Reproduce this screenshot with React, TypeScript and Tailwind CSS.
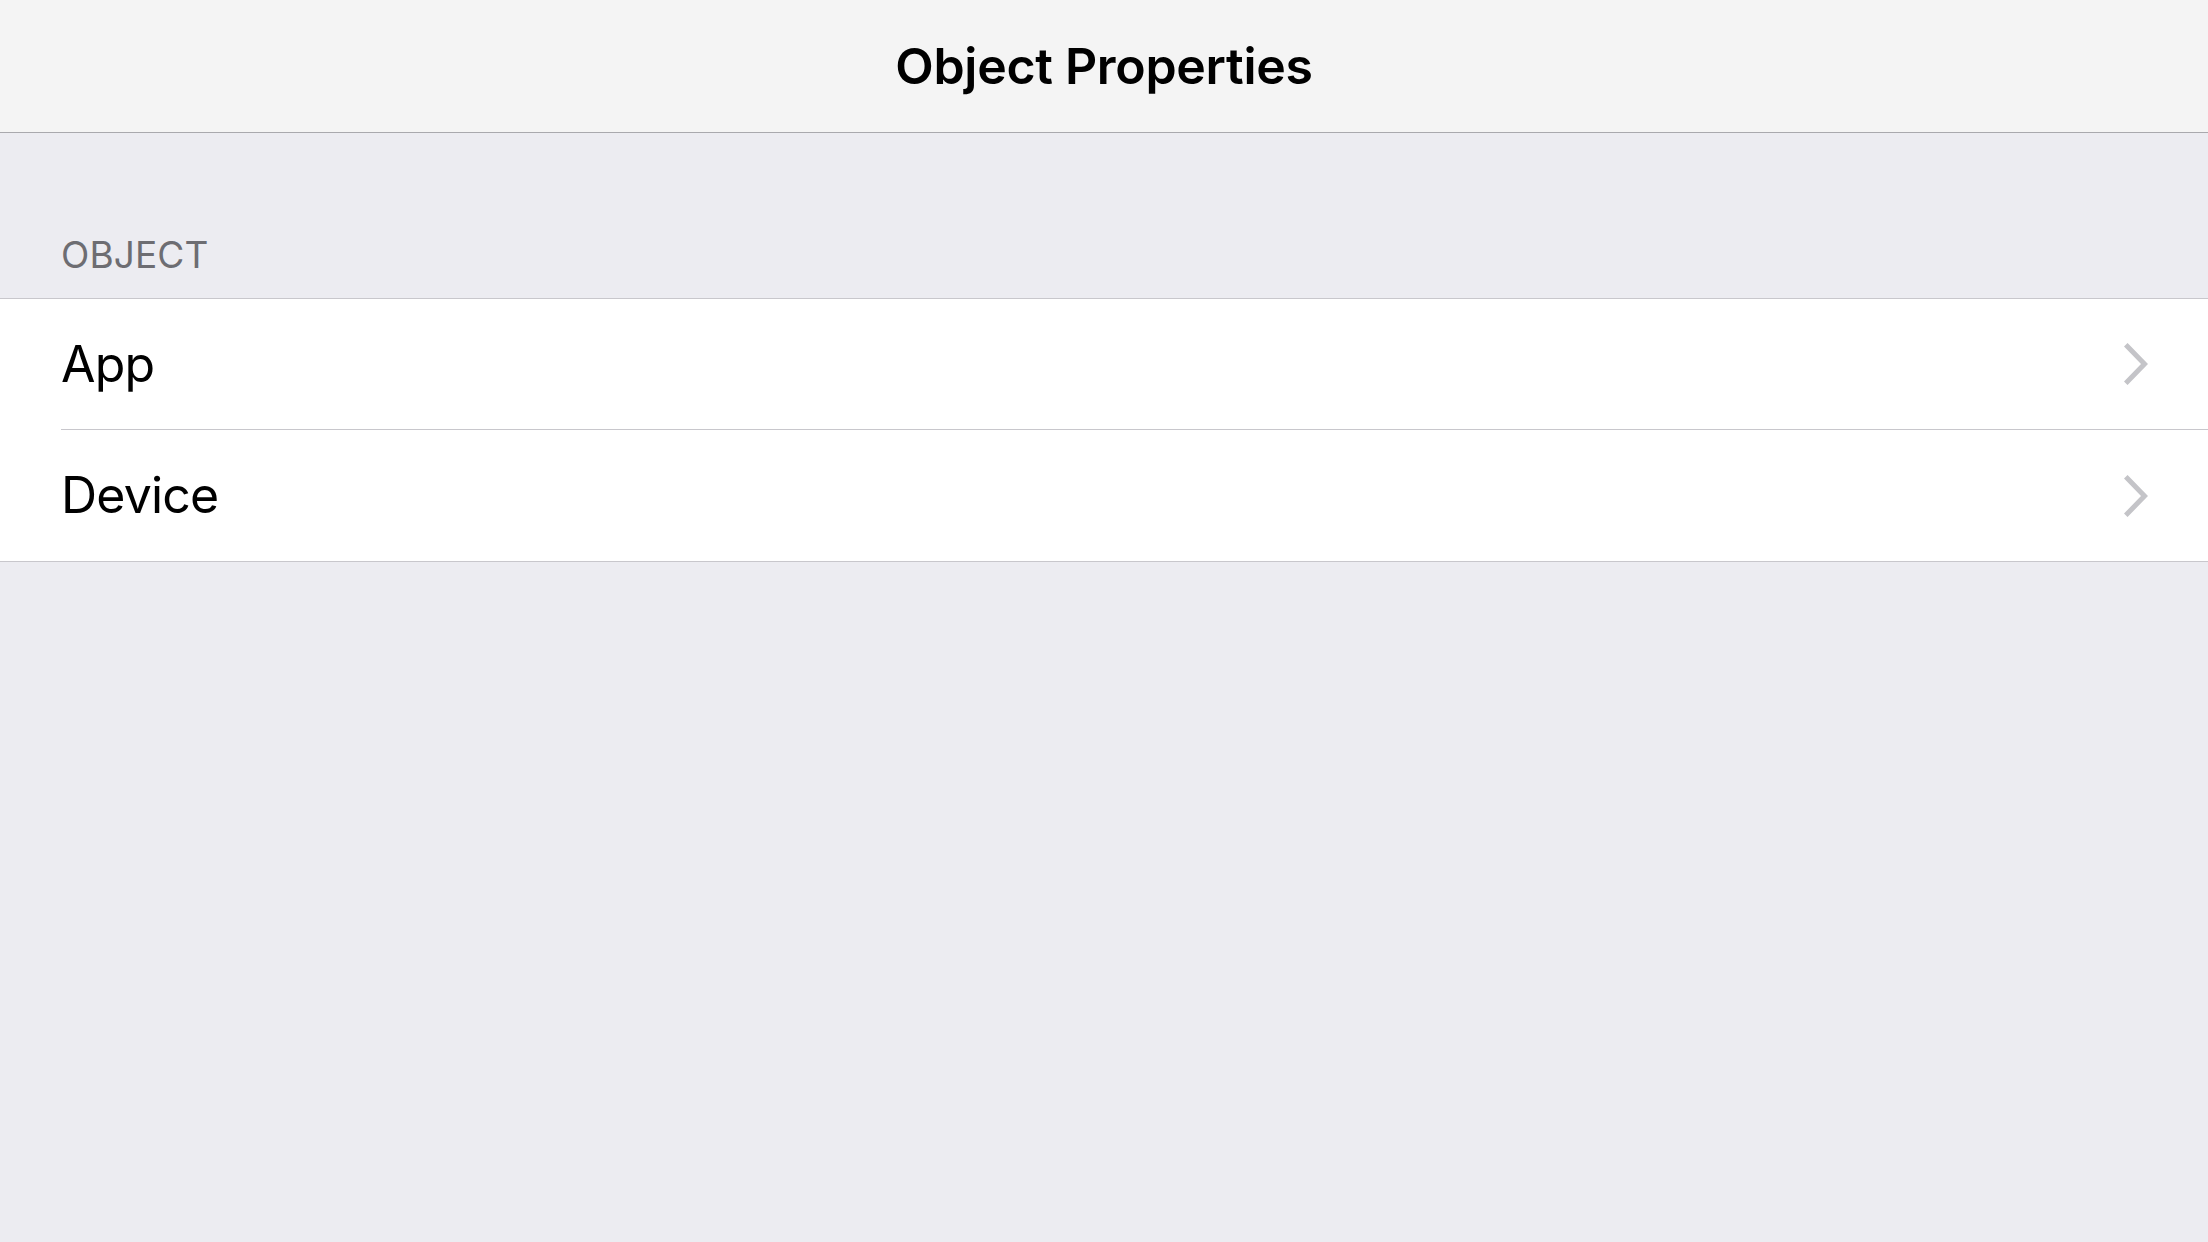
import React from 'react';

const rows = ['App', 'Device'];

function Chevron() {
  return (
    <svg width="24" height="42" viewBox="0 0 24 42" fill="none" className="shrink-0">
      <path d="M3.5 3.5 L20.5 21 L3.5 38.5" stroke="#c4c4c8" strokeWidth="5" strokeLinecap="square" strokeLinejoin="miter" />
    </svg>
  );
}

export default function App() {
  return (
    <div className="w-full h-[1242px] bg-[#ececf1] flex flex-col font-['Inter','Noto_Sans',sans-serif] overflow-hidden">
      {/* nav bar */}
      <div className="h-[133px] shrink-0 bg-[#f4f4f4] border-b border-[#a9a9ad] flex items-center justify-center">
        <h1 className="text-[50px] font-semibold text-black tracking-[-0.3px]">Object Properties</h1>
      </div>

      {/* section header */}
      <div className="h-[165px] shrink-0 flex items-end px-[61px] pb-[25px]">
        <span className="text-[37px] leading-none text-[#6d6d72] tracking-[0.1px]">OBJECT</span>
      </div>

      {/* list */}
      <div className="bg-white border-y border-[#c8c7cc]">
        {rows.map((r, i) => (
          <div key={r} className="pl-[61px]">
            <div className={`h-[131px] flex items-center justify-between pr-[60px] ${i < rows.length - 1 ? 'border-b border-[#c8c7cc]' : ''}`}>
              <span className="text-[50px] text-black tracking-[-0.8px]">{r}</span>
              <Chevron />
            </div>
          </div>
        ))}
      </div>
    </div>
  );
}
